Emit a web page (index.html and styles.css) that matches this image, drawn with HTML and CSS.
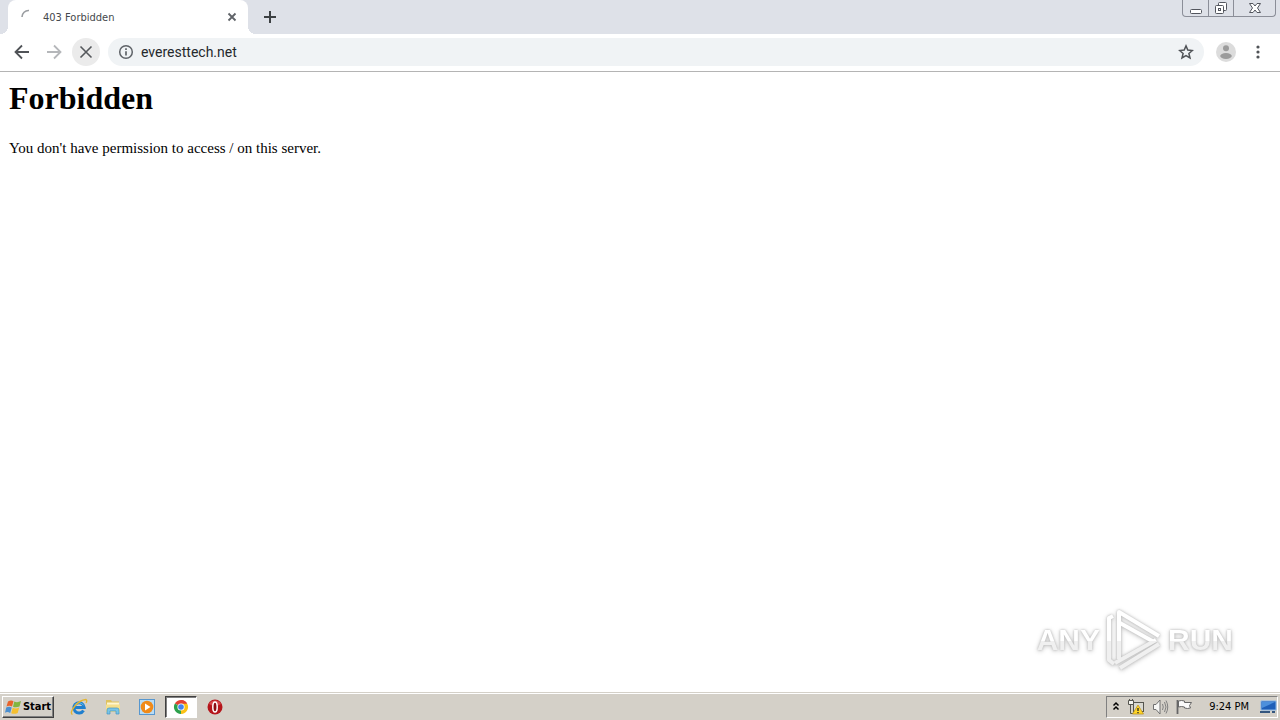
FILE: index.html
```html
<!DOCTYPE html>
<html lang="en">
  <head>
    <meta charset="utf-8">
    <meta name="viewport" content="width=device-width,initial-scale=1">
    <title>403 Forbidden</title>
    <link rel="stylesheet" href="styles.css">
  </head>
  <body>
    <div class="desktop">
      <header class="tabstrip">
        <div class="tab">
          <svg class="spinner" width="16" height="16" viewBox="0 0 16 16"><path d="M2 8A6.5 6.5 0 0 1 9 1.500" fill="none" stroke="#9a9da1" stroke-width="1.600"/></svg>
          <span class="tab-title">403 Forbidden</span>
          <button class="icon-btn" aria-label="Close tab">
            <svg width="16" height="16" viewBox="0 0 16 16"><path d="M4.500 4.500l7 7M11.500 4.500l-7 7" stroke="#5f6368" stroke-width="1.800"/></svg>
          </button>
        </div>
        <button class="icon-btn new-tab" aria-label="New tab">
          <svg width="16" height="16" viewBox="0 0 16 16"><path d="M8 2v12M2 8h12" stroke="#3c4043" stroke-width="2"/></svg>
        </button>
        <div class="window-controls">
          <button aria-label="Minimize">
            <svg width="14" height="14" viewBox="0 0 14 14"><rect x="1.500" y="8.500" width="11" height="4" rx="1" fill="#fff" stroke="#53565e"/></svg>
          </button>
          <button aria-label="Restore">
            <svg width="14" height="14" viewBox="0 0 14 14"><g fill="#fff" stroke="#53565e"><rect x="4.500" y="1.500" width="8" height="8" rx="1"/><rect x="1.500" y="4.500" width="8" height="8" rx="1"/><rect x="4.500" y="7.500" width="2" height="2"/></g></svg>
          </button>
          <button class="wide" aria-label="Close">
            <svg width="14" height="14" viewBox="0 0 14 14"><path d="M1.500 2.500h3.500l2 2.500 2-2.500h3.500L9.500 7l3 4.500H9L7 9l-2 2.500H1.500L4.500 7z" fill="#fff" stroke="#53565e"/></svg>
          </button>
        </div>
      </header>

      <nav class="toolbar">
        <button class="tool" aria-label="Back">
          <svg width="18" height="18" viewBox="0 0 18 18"><path d="M16 9H3M9 2.500L2.500 9 9 15.500" fill="none" stroke="#505357" stroke-width="1.800"/></svg>
        </button>
        <button class="tool" aria-label="Forward">
          <svg width="18" height="18" viewBox="0 0 18 18"><path d="M2 9h13M9 2.500L15.500 9 9 15.500" fill="none" stroke="#b5b7ba" stroke-width="1.800"/></svg>
        </button>
        <button class="tool stop" aria-label="Stop loading">
          <svg width="18" height="18" viewBox="0 0 18 18"><path d="M3.500 3.500l11 11M14.500 3.500l-11 11" stroke="#55585c" stroke-width="1.600"/></svg>
        </button>
        <div class="omnibox">
          <svg width="16" height="16" viewBox="0 0 16 16"><circle cx="8" cy="8" r="6.300" fill="none" stroke="#5f6368" stroke-width="1.500"/><path d="M8 7.200v4.300M8 4.300v1.700" stroke="#5f6368" stroke-width="1.700"/></svg>
          <input class="url" type="text" aria-label="Address" value="everesttech.net">
          <button class="icon-btn" aria-label="Bookmark this page">
            <svg width="16" height="16" viewBox="0 0 16 16"><path d="M8 1.900l1.800 4.200 4.600.4-3.500 3 1.100 4.500L8 11.600 4 14l1.100-4.500-3.500-3 4.600-.4z" fill="none" stroke="#505357" stroke-width="1.500"/></svg>
          </button>
        </div>
        <button class="tool" aria-label="Profile">
          <svg width="20" height="20" viewBox="0 0 20 20"><circle cx="10" cy="10" r="10" fill="#dcdcdc"/><circle cx="10" cy="6.300" r="3" fill="#9b9b9b"/><ellipse cx="10" cy="14" rx="5.800" ry="2.900" fill="#9b9b9b"/></svg>
        </button>
        <button class="tool" aria-label="Menu">
          <svg width="18" height="18" viewBox="0 0 18 18"><g fill="#505357"><circle cx="9" cy="4" r="1.600"/><circle cx="9" cy="9" r="1.600"/><circle cx="9" cy="14" r="1.600"/></g></svg>
        </button>
      </nav>

      <main class="page">
        <h1>Forbidden</h1>
        <p>You don't have permission to access / on this server.</p>
        <div class="watermark">
          <span>ANY</span>
          <svg width="60" height="64" viewBox="0 0 60 64">
            <defs>
              <linearGradient id="fade" gradientUnits="userSpaceOnUse" x1="0" y1="0" x2="0" y2="64">
                <stop offset=".52" stop-color="#fff"/>
                <stop offset=".52" stop-color="#f0f0f0"/>
              </linearGradient>
            </defs>
            <g fill="none" stroke="url(#fade)" stroke-width="4" stroke-linejoin="round">
              <path d="M9 8L5 10v42l5 4"/>
              <path d="M15 51V4l40 24"/>
              <path d="M16 15l34 19"/>
              <path d="M11 55l41-23"/>
              <path d="M16 60l39-24"/>
            </g>
          </svg>
          <span>RUN</span>
        </div>
      </main>

      <footer class="taskbar">
        <button class="start">
          <svg width="17" height="16" viewBox="0 0 17 16">
            <path d="M3 2.500q3-2 5.500-.3L7 7.500Q4.500 6 1.500 7.500z" fill="#e8632b"/>
            <path d="M9.300 2.500q3 1.500 6.700-.5l-1.500 5.500q-3.500 1.500-6.500.3z" fill="#82b540"/>
            <path d="M1.200 8.500q3-1.500 5.500 0L5.200 14Q2.500 12.300 0 13.700z" fill="#4b8fd0"/>
            <path d="M7.700 8.800q3 1.400 6.500-.2L12.700 14q-3.500 1.600-6.500.2z" fill="#f5bf2f"/>
          </svg>
          Start
        </button>
        <button class="launch" aria-label="Internet Explorer">
          <svg width="18" height="18" viewBox="0 0 18 18">
            <path d="M13.500 12.500A5.200 5.200 0 1 1 14.200 9.500H5" fill="none" stroke="#1f7fce" stroke-width="3"/>
            <path d="M4.500 7q4.500-4.500 9 0" fill="none" stroke="#63c2f1" stroke-width="1"/>
            <path d="M2.500 16.500Q-.5 15 4.500 8.500T16 1.500q1.500 1 0 3.500" fill="none" stroke="#e4b52e" stroke-width="1.300"/>
          </svg>
        </button>
        <button class="launch" aria-label="Windows Explorer">
          <svg width="18" height="18" viewBox="0 0 18 18">
            <path d="M2 2h5l1 1.500h7V13H2z" fill="#dfc25f"/>
            <path d="M3 4.500h12v3H3z" fill="#fff6cf"/>
            <path d="M2 6.500h14V14H2z" fill="#f5df8d"/>
            <path d="M3 16v-4q0-2 2-2h8q2 0 2 2v4h-3v-3H6v3z" fill="#79c4e6" stroke="#4296c4" stroke-width=".7"/>
          </svg>
        </button>
        <button class="launch" aria-label="Media Player">
          <svg width="18" height="18" viewBox="0 0 18 18">
            <rect x="1.500" y="1.500" width="15" height="15" fill="#b8dcf5" stroke="#5797cf"/>
            <circle cx="9" cy="9" r="6.300" fill="#f08a18"/>
            <path d="M7 5.500v7L12.500 9z" fill="#fff"/>
          </svg>
        </button>
        <button class="launch active" aria-label="Chrome">
          <svg width="16" height="16" viewBox="0 0 16 16">
            <path d="M8 8L1.900 4.500A7 7 0 0 1 14.100 4.500z" fill="#e34133"/>
            <path d="M8 8h-.1L14.100 4.500A7 7 0 0 1 8 15z" fill="#fbc116"/>
            <path d="M8 8v7A7 7 0 0 1 1.900 4.500z" fill="#2da14c"/>
            <path d="M8 4.500h6.100L11 10z" fill="#fbc116"/>
            <path d="M8 4.500h6.100A7 7 0 0 0 8 1z" fill="#e34133"/>
            <circle cx="8" cy="8" r="3.600" fill="#fff"/>
            <circle cx="8" cy="8" r="2.800" fill="#4483ee"/>
          </svg>
        </button>
        <button class="launch" aria-label="Opera">
          <svg width="18" height="18" viewBox="0 0 18 18">
            <circle cx="9" cy="9" r="7.500" fill="#b5151b"/>
            <path d="M3 6a7 7 0 0 1 12 0q-6 4-12 0z" fill="#d8474b"/>
            <ellipse cx="9" cy="9" rx="2.200" ry="5" fill="#8e0c12" stroke="#fff" stroke-width="1.500"/>
          </svg>
        </button>
        <div class="tray">
          <svg width="10" height="14" viewBox="0 0 10 14"><path d="M2.500 5.500L5 3l2.500 2.500M2.500 9.500L5 7l2.500 2.500" fill="none" stroke="#000" stroke-width="1.500"/></svg>
          <svg width="18" height="18" viewBox="0 0 18 18">
            <rect x="6.500" y="4.500" width="10" height="9" fill="#d9d9d2" stroke="#55554f"/>
            <path d="M3.500 7v8.500H8" fill="none" stroke="#55554f"/>
            <path d="M1.500 2.500h5v4h-5zM2.500 1v2M5.500 1v2" fill="#f4f4ef" stroke="#55554f"/>
            <path d="M11 7l5.500 9h-11z" fill="#ffd528" stroke="#b78d12" stroke-width=".7"/>
            <path d="M11 10v3M11 14v1.300" stroke="#222" stroke-width="1.300"/>
          </svg>
          <svg width="18" height="18" viewBox="0 0 18 18">
            <path d="M2.500 6.500H5l4-4.500v14l-4-4.500H2.500z" fill="#f7f7f5" stroke="#707070"/>
            <path d="M11.500 6q1.500 3 0 6M13.500 4q3 5 0 10M15 2.500q3.500 6.500 0 13" fill="none" stroke="#808080"/>
          </svg>
          <svg width="18" height="18" viewBox="0 0 18 18">
            <path d="M2.500 2v14" stroke="#666" stroke-width="1.800"/>
            <path d="M3.500 3q3-1 6 0v1.500h7l-2 3 1 2.500q-3 1-6 0V9q-3-1-6 0z" fill="#fafafa" stroke="#666"/>
          </svg>
          <time class="clock">9:24 PM</time>
          <svg width="18" height="18" viewBox="0 0 18 18">
            <path d="M2 3h15v9H2z" fill="#1e5fb8" stroke="#86b6e8"/>
            <path d="M3 4h13L3 10z" fill="#4c90dc"/>
            <path d="M1 14h10M13 14h3" stroke="#34567e" stroke-width="2"/>
          </svg>
        </div>
      </footer>
    </div>
  </body>
</html>
```
FILE: styles.css
```css
* {
  box-sizing: border-box;
}

body {
  margin: 0;
  background: #fff;
  color: #000;
}

svg {
  display: block;
  flex: none;
}

button {
  display: flex;
  align-items: center;
  justify-content: center;
  margin: 0;
  padding: 0;
  border: 0;
  background: none;
}

.desktop {
  display: flex;
  flex-direction: column;
  min-height: 100vh;
}

/* tabs */
.tabstrip {
  display: flex;
  height: 34px;
  padding-left: 8px;
  background: #dee1e8;
}

.tab {
  position: relative;
  display: flex;
  align-items: center;
  width: 240px;
  padding: 0 8px 0 12px;
  border-radius: 8px 8px 0 0;
  background: #fff;
}

.tab::before,
.tab::after {
  content: "";
  position: absolute;
  bottom: 0;
  width: 8px;
  height: 8px;
}

.tab::before {
  left: -8px;
  background: radial-gradient(circle at 0 0, #dee1e8 8px, #fff 8px);
}

.tab::after {
  right: -8px;
  background: radial-gradient(circle at 100% 0, #dee1e8 8px, #fff 8px);
}

.tab-title {
  flex: 1;
  margin-left: 7px;
  font: 11px "DejaVu Sans Condensed", "DejaVu Sans", sans-serif;
  color: #45484c;
}

.new-tab {
  margin-left: 14px;
}

.window-controls {
  display: flex;
  height: 17px;
  margin-left: auto;
  margin-right: 4px;
  border: 1px solid #8b8e98;
  border-top: 0;
  border-radius: 0 0 4px 4px;
}

.window-controls button {
  width: 25px;
}

.window-controls button + button {
  border-left: 1px solid #8b8e98;
}

.window-controls .wide {
  width: 42px;
}

/* toolbar */
.toolbar {
  display: flex;
  align-items: center;
  gap: 4px;
  height: 38px;
  padding: 0 8px 1px;
  border-bottom: 1px solid #b4b4b4;
}

.tool {
  width: 28px;
  height: 28px;
  border-radius: 50%;
}

.stop {
  background: #ebebeb;
}

.omnibox {
  display: flex;
  flex: 1;
  align-items: center;
  height: 28px;
  margin: 0 4px;
  padding: 0 10px;
  border-radius: 14px;
  background: #f0f3f5;
}

.url {
  flex: 1;
  min-width: 0;
  margin-left: 7px;
  padding: 0;
  border: 0;
  outline: 0;
  background: none;
  font: 14px Roboto, sans-serif;
  color: #25282c;
}

/* page */
.page {
  position: relative;
  flex: 1;
  padding: 8px 9px;
  font: 15px "Liberation Serif", serif;
}

.page h1 {
  margin: 0 0 22px;
  font-size: 32px;
  line-height: 37px;
}

.page p {
  margin: 0;
  line-height: 18px;
}

.watermark {
  position: absolute;
  right: 47px;
  bottom: 20px;
  display: flex;
  align-items: center;
  gap: 4px;
  font: bold 30px "Liberation Sans", sans-serif;
  filter: drop-shadow(0 0 1px #bbb) drop-shadow(0 1px 2px #ccc);
}

.watermark span {
  background: linear-gradient(#fff 52%, #f0f0f0 52%);
  background-clip: text;
  -webkit-background-clip: text;
  color: transparent;
}

/* taskbar */
.taskbar {
  display: flex;
  align-items: center;
  height: 28px;
  padding: 0 2px;
  border-top: 1px solid #d4d0c8;
  background: #d4d0c8;
  box-shadow: inset 0 1px #fff;
  font: 11px "DejaVu Sans Condensed", "DejaVu Sans", sans-serif;
}

.start {
  gap: 1px;
  width: 52px;
  height: 22px;
  margin-right: 9px;
  border: 1px solid;
  border-color: #fff #404040 #404040 #fff;
  box-shadow: inset -1px -1px #808080;
  font: bold 11px "DejaVu Sans Condensed", "DejaVu Sans", sans-serif;
  color: #000;
}

.launch {
  width: 32px;
  height: 22px;
  margin-right: 2px;
}

.active {
  border: 1px solid;
  border-color: #404040 #fff #fff #404040;
  background: #fff;
  box-shadow: inset 1px 1px #808080;
}

.tray {
  display: flex;
  align-items: center;
  gap: 6px;
  height: 22px;
  margin-left: auto;
  padding: 0 0 0 4px;
  border: 1px solid;
  border-color: #808080 #fff #fff #808080;
}

.clock {
  margin: 0 4px 0 10px;
}
```
